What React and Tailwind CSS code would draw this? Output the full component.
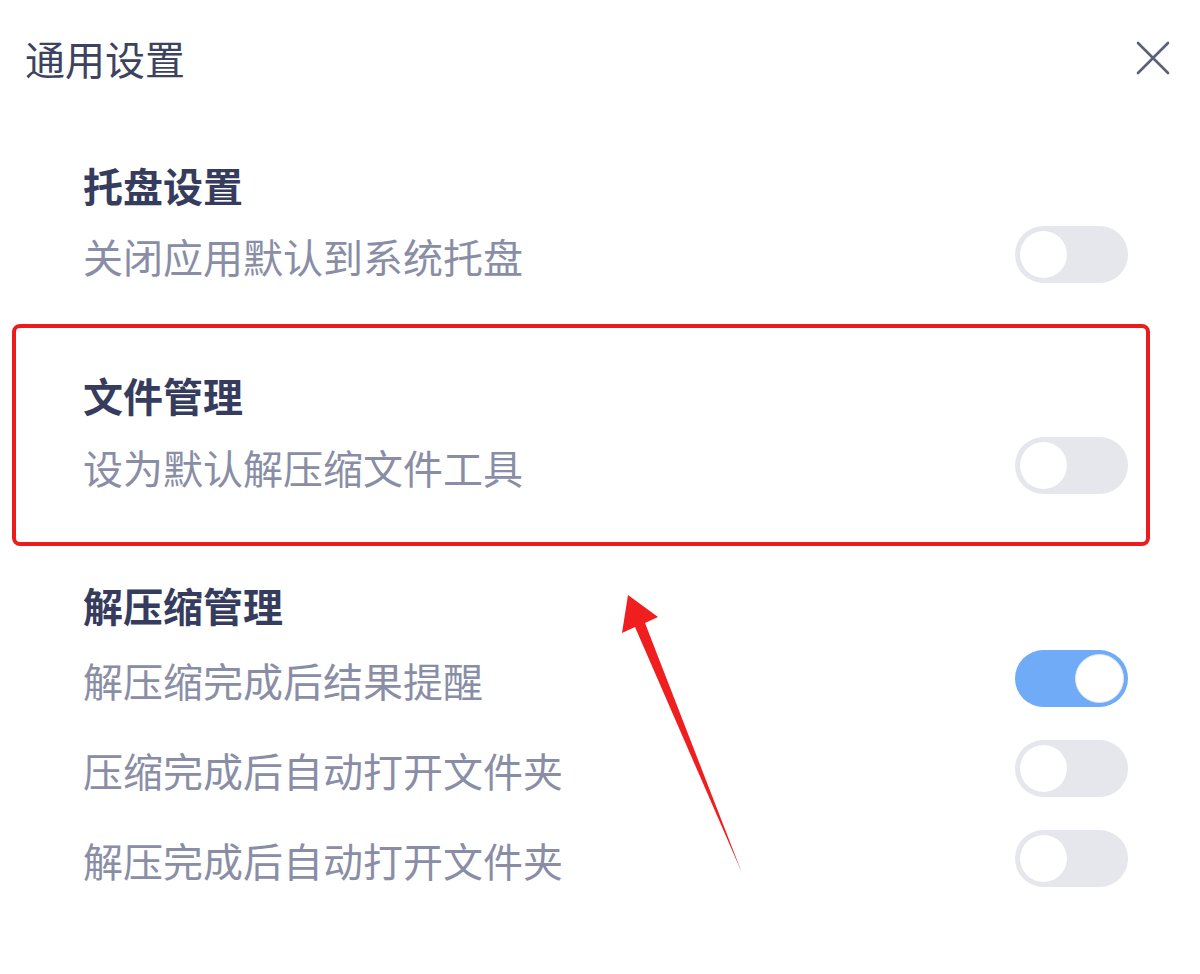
import React, { useState } from 'react';

const font = { fontFamily: '"Noto Sans CJK SC", "Noto Sans", sans-serif' };

const Toggle = ({ on, onChange }) => (
  <button
    onClick={onChange}
    className={`relative w-[113px] h-[57px] rounded-full shrink-0 transition-colors ${on ? 'bg-[#6fabf6]' : 'bg-[#e6e7ed]'}`}
  >
    <span
      className={`absolute top-[4px] w-[49px] h-[49px] rounded-full bg-white border border-[#e3e5ec] transition-all ${on ? 'left-[60px]' : 'left-[4px]'}`}
    />
  </button>
);

const Row = ({ label, on, onChange }) => (
  <div className="flex items-center justify-between h-[57px]">
    <span className="text-[40px] leading-[40px] text-[#898ea6] pt-[2px]">{label}</span>
    <Toggle on={on} onChange={onChange} />
  </div>
);

const Heading = ({ children }) => (
  <div className="text-[40px] leading-[40px] font-bold text-[#363c5d]">{children}</div>
);

export default function App() {
  const [tray, setTray] = useState(false);
  const [defaultTool, setDefaultTool] = useState(false);
  const [notify, setNotify] = useState(true);
  const [openAfterZip, setOpenAfterZip] = useState(false);
  const [openAfterUnzip, setOpenAfterUnzip] = useState(false);

  return (
    <div className="relative w-[1200px] h-[974px] bg-white overflow-hidden" style={font}>
      {/* header */}
      <div className="flex items-start justify-between pl-[25px] pr-[30px] pt-[38px]">
        <span className="text-[40px] leading-[40px] text-[#3d4261]">通用设置</span>
        <svg width="34" height="34" viewBox="0 0 34 34" className="mt-[3px]">
          <path d="M2 2 L32 32 M32 2 L2 32" stroke="#5a5f7a" strokeWidth="2.6" strokeLinecap="round" />
        </svg>
      </div>

      {/* 托盘设置 */}
      <div className="pl-[83px] pr-[72px] mt-[87px]">
        <Heading>托盘设置</Heading>
        <div className="mt-[21px]">
          <Row label="关闭应用默认到系统托盘" on={tray} onChange={() => setTray(!tray)} />
        </div>
      </div>

      {/* 文件管理 (highlighted) */}
      <div className="mx-[12px] w-[1138px] mt-[41px] border-[4px] border-[#ec1c1c] rounded-[8px] pl-[67px] pr-[18px] pt-[47px] pb-[48px]">
        <Heading>文件管理</Heading>
        <div className="mt-[22px]">
          <Row label="设为默认解压缩文件工具" on={defaultTool} onChange={() => setDefaultTool(!defaultTool)} />
        </div>
      </div>

      {/* 解压缩管理 */}
      <div className="pl-[83px] pr-[72px] mt-[39px]">
        <Heading>解压缩管理</Heading>
        <div className="mt-[25px] flex flex-col gap-[33px]">
          <Row label="解压缩完成后结果提醒" on={notify} onChange={() => setNotify(!notify)} />
          <Row label="压缩完成后自动打开文件夹" on={openAfterZip} onChange={() => setOpenAfterZip(!openAfterZip)} />
          <Row label="解压完成后自动打开文件夹" on={openAfterUnzip} onChange={() => setOpenAfterUnzip(!openAfterUnzip)} />
        </div>
      </div>

      {/* annotation arrow */}
      <svg className="absolute left-0 top-0 pointer-events-none" width="1200" height="974">
        <polygon
          points="628,595 658,617 645,623 742,873 635,627 622,633"
          fill="#f01e1e"
        />
      </svg>
    </div>
  );
}
